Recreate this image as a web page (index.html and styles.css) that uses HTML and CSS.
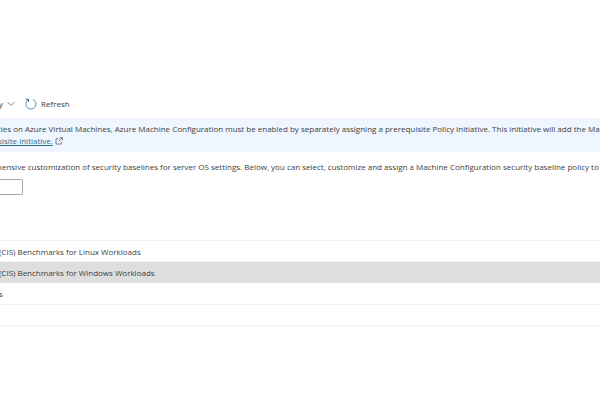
FILE: index.html
```html
<!DOCTYPE html>
<html lang="en">

<head>
    <meta charset="UTF-8">
    <meta name="viewport" content="width=device-width, initial-scale=1.0">
    <title>Machine Configuration</title>
    <link rel="stylesheet" href="styles.css">
</head>

<body>

    <div class="toolbar">
        <button type="button" class="menu-btn">y
            <svg class="chevron" viewBox="0 0 8 8" aria-hidden="true">
                <path d="M0.5 2L4 5.5L7.5 2" />
            </svg>
        </button>
        <button type="button" class="refresh-btn">
            <svg class="refresh-icon" viewBox="0 0 12 12" aria-hidden="true">
                <path class="arc" d="M7.8 1.4A5 5 0 1 1 3.2 1.8" />
                <path class="arrow" d="M0.9 1.3H3.5V3.9" />
            </svg>
            Refresh
        </button>
    </div>

    <div class="notice">
        <p>cies on Azure Virtual Machines, Azure Machine Configuration must be enabled by separately assigning a prerequisite Policy Initiative. This initiative will add the Ma</p>
        <p>
            <a href="#">uisite initiative.</a>
            <svg class="external-icon" viewBox="0 0 8 8" aria-hidden="true">
                <path d="M3.5 1.7H1V7H6.3V4.5M4.7 0.7H7.3V3.3M7.3 0.7L3.8 4.2" />
            </svg>
        </p>
    </div>

    <p class="intro">hensive customization of security baselines for server OS settings. Below, you can select, customize and assign a Machine Configuration security baseline policy to</p>

    <input type="text" class="search" aria-label="Search">

    <table class="baselines">
        <tbody>
            <tr><td>(CIS) Benchmarks for Linux Workloads</td></tr>
            <tr class="selected"><td>(CIS) Benchmarks for Windows Workloads</td></tr>
            <tr><td>s</td></tr>
            <tr><td></td></tr>
        </tbody>
    </table>

</body>

</html>
```
FILE: styles.css
```css
* {
    margin: 0;
    padding: 0;
    box-sizing: border-box;
}

body {
    background-color: #fff;
    color: #404040;
    font-family: "Open Sans", "Noto Sans", sans-serif;
    font-size: 8px;
    line-height: 12px;
    padding-top: 96px;
    text-indent: -3px;
    white-space: nowrap;
    overflow-x: hidden;
}

button,
input {
    font: inherit;
    color: inherit;
    background: none;
    border: none;
}

svg {
    fill: none;
    stroke: #666;
    stroke-width: 0.8;
}

.toolbar {
    display: flex;
    align-items: center;
    gap: 10px;
    height: 16px;
}

.menu-btn,
.refresh-btn {
    display: flex;
    align-items: center;
    gap: 4px;
    cursor: pointer;
}

.menu-btn {
    margin-left: -1px;
}

.chevron {
    width: 8px;
    height: 8px;
}

.refresh-icon {
    width: 12px;
    height: 12px;
    stroke-width: 1;
}

.refresh-icon .arc {
    stroke: #4d96bd;
}

.refresh-icon .arrow {
    stroke: #3c6680;
}

.notice {
    background-color: #eff6ff;
    height: 34px;
    margin-top: 6px;
    padding-top: 5px;
    overflow: hidden;
}

.notice a {
    color: #2c6c90;
}

.external-icon {
    width: 8px;
    height: 8px;
    vertical-align: -1px;
}

.intro {
    margin-top: 9px;
    overflow: hidden;
}

.search {
    display: block;
    width: 23px;
    height: 16px;
    margin-top: 6px;
    border: 1px solid #a8a8a8;
    border-left: none;
    border-radius: 0 2px 2px 0;
}

.baselines {
    width: 100%;
    margin-top: 45px;
    border-collapse: collapse;
    text-indent: -1px;
}

.baselines td {
    height: 21px;
    padding-top: 1px;
    border-top: 1px solid #f3f3f3;
    border-bottom: 1px solid #f3f3f3;
}

.baselines tr:nth-child(3) td {
    height: 22px;
}

.baselines .selected td {
    background-color: #dedede;
    border-color: #e2e2e2;
}
```
